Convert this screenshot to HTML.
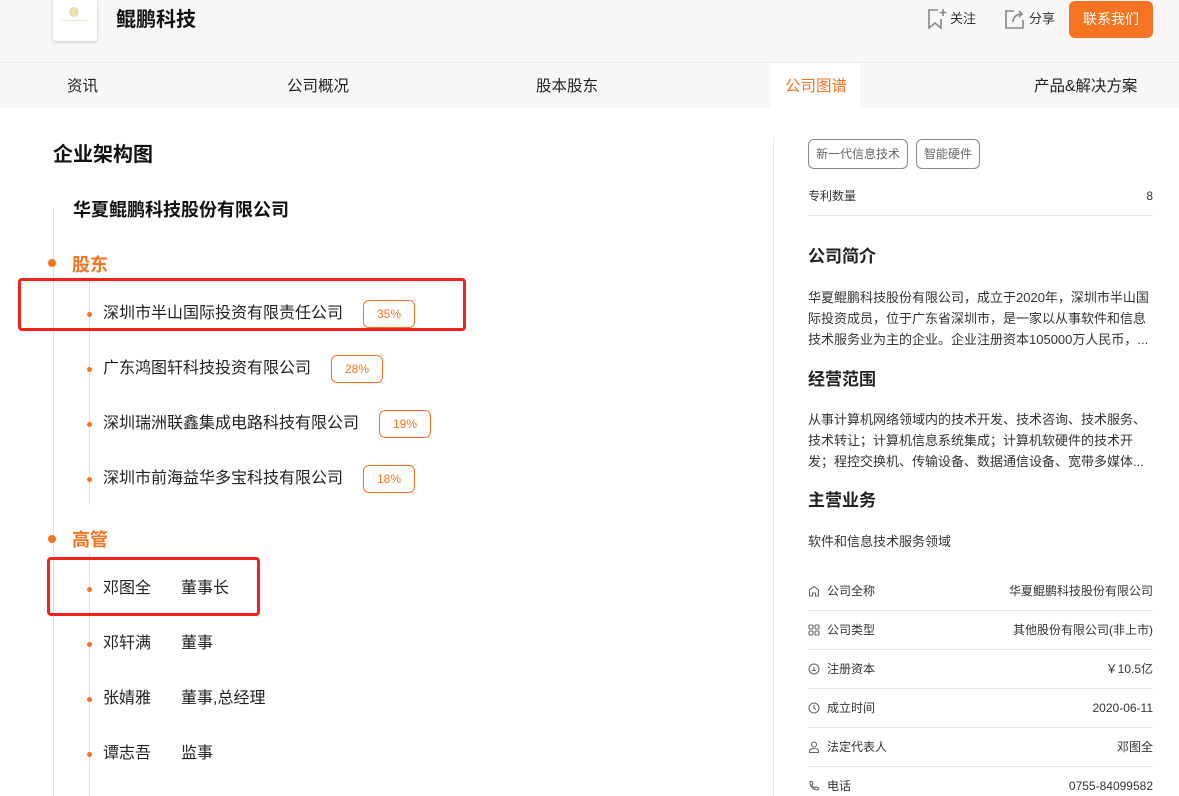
<!DOCTYPE html>
<html><head><meta charset="utf-8"><style>
*{margin:0;padding:0;box-sizing:border-box}
body{width:1179px;height:796px;overflow:hidden;background:#fff;font-family:"Liberation Sans","Noto Sans CJK SC",sans-serif;color:#222;position:relative}
.a{position:absolute;white-space:nowrap}
.t{height:20px;line-height:20px}
.or{color:#f57321}
.dot{position:absolute;border-radius:50%;background:#f57321}
.badge{position:absolute;width:52px;height:28px;border:1px solid #f57321;border-radius:6px;color:#f57321;font-size:12px;line-height:26px;text-align:center}
.tag{position:absolute;top:139px;height:30px;border:1px solid #888;border-radius:6px;color:#666;font-size:12px;line-height:28px;padding:0 7px}
.row{position:absolute;left:808px;width:345px;height:20px;line-height:20px;font-size:12px;color:#333}
.row .r{position:absolute;right:0;top:0}
.row .l{position:absolute;left:19px;top:0}
.row svg{position:absolute;left:0;top:4px}
.hr{position:absolute;left:808px;width:345px;height:1px;background:#e5e5e5}
.p{position:absolute;left:808px;font-size:13px;line-height:21px;color:#333;width:350px}
.h{position:absolute;left:808px;font-size:17px;font-weight:bold;height:24px;line-height:24px}
.red{position:absolute;border:3px solid #f5221b;border-radius:4px}
</style></head><body>
<div class="a" style="left:0;top:0;width:1179px;height:62px;background:#f7f7f7"></div>
<div class="a" style="left:0;top:62px;width:1179px;height:1px;background:#ebebeb"></div>
<div class="a" style="left:0;top:63px;width:1179px;height:45px;background:#f7f7f7"></div>
<div class="a" style="left:53px;top:0;width:44px;height:41px;background:#fff;border-radius:0 0 3px 3px;box-shadow:0 1px 3px rgba(0,0,0,.2)"><div style="position:absolute;left:16px;top:7px;width:10px;height:10px;border-radius:50%;background:#eadfb0"></div><div style="position:absolute;left:8px;top:20px;width:28px;height:1px;background:#efe6c4"></div></div>
<div class="a" style="left:116px;top:7px;font-size:20px;font-weight:bold;line-height:26px;color:#111">鲲鹏科技</div>
<svg class="a" style="left:926px;top:8px" width="22" height="22" viewBox="0 0 22 22" fill="none" stroke="#888" stroke-width="1.6"><path d="M12 2H3v18l6-5 6 5V11"/><path d="M17 1v7M13.5 4.5h7"/></svg>
<div class="a" style="left:950px;top:9px;font-size:13px;line-height:20px;color:#333">关注</div>
<svg class="a" style="left:1004px;top:8px" width="22" height="22" viewBox="0 0 22 22" fill="none" stroke="#888" stroke-width="1.6"><path d="M10 3H2v17h17v-8"/><path d="M9 14c0-5 4-8 9-8M15 3l3 3-3 3"/></svg>
<div class="a" style="left:1029px;top:9px;font-size:13px;line-height:20px;color:#333">分享</div>
<div class="a" style="left:1069px;top:1px;width:84px;height:37px;background:#f57321;border-radius:6px;color:#fff;font-size:14px;line-height:37px;text-align:center">联系我们</div>
<div class="a" style="left:770px;top:63px;width:90px;height:45px;background:#fff"></div>
<div class="a t" style="left:67px;top:77px;font-size:15.5px">资讯</div>
<div class="a t" style="left:287px;top:77px;font-size:15.5px">公司概况</div>
<div class="a t" style="left:536px;top:77px;font-size:15.5px">股本股东</div>
<div class="a t or" style="left:785px;top:77px;font-size:15.5px">公司图谱</div>
<div class="a t" style="left:1034px;top:77px;font-size:15.5px">产品&amp;解决方案</div>

<div class="a" style="left:53px;top:142px;font-size:20px;font-weight:bold;line-height:26px;color:#111">企业架构图</div>
<div class="a" style="left:53px;top:208px;width:1px;height:588px;background:#e0e0e0"></div>
<div class="a" style="left:73px;top:198px;font-size:18px;font-weight:bold;line-height:24px;color:#111">华夏鲲鹏科技股份有限公司</div>
<div class="dot" style="left:48px;top:259px;width:8px;height:8px"></div>
<div class="a or" style="left:72px;top:253px;font-size:18px;font-weight:bold;line-height:24px">股东</div>
<div class="a" style="left:89px;top:280px;width:1px;height:225px;background:#e0e0e0"></div>
<div class="dot" style="left:87px;top:312px;width:5px;height:5px"></div>
<div class="a t" style="left:103px;top:304px;font-size:16px">深圳市半山国际投资有限责任公司</div>
<div class="badge" style="left:363px;top:300px">35%</div>
<div class="dot" style="left:87px;top:367px;width:5px;height:5px"></div>
<div class="a t" style="left:103px;top:359px;font-size:16px">广东鸿图轩科技投资有限公司</div>
<div class="badge" style="left:331px;top:355px">28%</div>
<div class="dot" style="left:87px;top:422px;width:5px;height:5px"></div>
<div class="a t" style="left:103px;top:414px;font-size:16px">深圳瑞洲联鑫集成电路科技有限公司</div>
<div class="badge" style="left:379px;top:410px">19%</div>
<div class="dot" style="left:87px;top:477px;width:5px;height:5px"></div>
<div class="a t" style="left:103px;top:469px;font-size:16px">深圳市前海益华多宝科技有限公司</div>
<div class="badge" style="left:363px;top:465px">18%</div>
<div class="red" style="left:18px;top:278px;width:448px;height:53px"></div>

<div class="dot" style="left:48px;top:535px;width:8px;height:8px"></div>
<div class="a or" style="left:72px;top:528px;font-size:18px;font-weight:bold;line-height:24px">高管</div>
<div class="a" style="left:89px;top:553px;width:1px;height:243px;background:#e0e0e0"></div>
<div class="red" style="left:47px;top:557px;width:213px;height:59px"></div>
<div class="dot" style="left:87px;top:587px;width:5px;height:5px"></div>
<div class="a t" style="left:103px;top:579px;font-size:16px">邓图全</div><div class="a t" style="left:181px;top:579px;font-size:16px">董事长</div>
<div class="dot" style="left:87px;top:642px;width:5px;height:5px"></div>
<div class="a t" style="left:103px;top:634px;font-size:16px">邓轩满</div><div class="a t" style="left:181px;top:634px;font-size:16px">董事</div>
<div class="dot" style="left:87px;top:697px;width:5px;height:5px"></div>
<div class="a t" style="left:103px;top:689px;font-size:16px">张婧雅</div><div class="a t" style="left:181px;top:689px;font-size:16px">董事,总经理</div>
<div class="dot" style="left:87px;top:752px;width:5px;height:5px"></div>
<div class="a t" style="left:103px;top:744px;font-size:16px">谭志吾</div><div class="a t" style="left:181px;top:744px;font-size:16px">监事</div>

<div class="a" style="left:773px;top:138px;width:1px;height:658px;background:#e8e8e8"></div>
<div class="tag" style="left:808px;width:100px">新一代信息技术</div>
<div class="tag" style="left:916px;width:64px">智能硬件</div>
<div class="row" style="top:186px"><span>专利数量</span><span class="r">8</span></div>
<div class="hr" style="top:215px"></div>
<div class="h" style="top:245px">公司简介</div>
<div class="p" style="top:287px">华夏鲲鹏科技股份有限公司，成立于2020年，深圳市半山国<br>际投资成员，位于广东省深圳市，是一家以从事软件和信息<br>技术服务业为主的企业。企业注册资本105000万人民币，...</div>
<div class="h" style="top:368px">经营范围</div>
<div class="p" style="top:409px">从事计算机网络领域内的技术开发、技术咨询、技术服务、<br>技术转让；计算机信息系统集成；计算机软硬件的技术开<br>发；程控交换机、传输设备、数据通信设备、宽带多媒体...</div>
<div class="h" style="top:489px">主营业务</div>
<div class="p" style="top:531px">软件和信息技术服务领域</div>

<div class="row" style="top:581px"><svg width="12" height="12" viewBox="0 0 12 12" fill="none" stroke="#666" stroke-width="1.1"><path d="M1.5 11V5L6 1.5 10.5 5V11H7.5V8h-3v3z"/></svg><span class="l">公司全称</span><span class="r">华夏鲲鹏科技股份有限公司</span></div>
<div class="hr" style="top:610px"></div>
<div class="row" style="top:620px"><svg width="12" height="12" viewBox="0 0 12 12" fill="none" stroke="#666" stroke-width="1.1"><rect x="1" y="1" width="4" height="4" rx="1"/><rect x="7" y="1" width="4" height="4" rx="1"/><rect x="1" y="7" width="4" height="4" rx="1"/><rect x="7" y="7" width="4" height="4" rx="1"/></svg><span class="l">公司类型</span><span class="r">其他股份有限公司(非上市)</span></div>
<div class="hr" style="top:649px"></div>
<div class="row" style="top:659px"><svg width="12" height="12" viewBox="0 0 12 12" fill="none" stroke="#666" stroke-width="1.1"><circle cx="6" cy="6" r="5"/><path d="M4 7.5h4M6 4v4" /></svg><span class="l">注册资本</span><span class="r">￥10.5亿</span></div>
<div class="hr" style="top:688px"></div>
<div class="row" style="top:698px"><svg width="12" height="12" viewBox="0 0 12 12" fill="none" stroke="#666" stroke-width="1.1"><circle cx="6" cy="6" r="5"/><path d="M6 3v3l2 1.5"/></svg><span class="l">成立时间</span><span class="r">2020-06-11</span></div>
<div class="hr" style="top:727px"></div>
<div class="row" style="top:737px"><svg width="12" height="12" viewBox="0 0 12 12" fill="none" stroke="#666" stroke-width="1.1"><circle cx="6" cy="3.5" r="2.5"/><path d="M1.5 11.5v-1.5c0-1.5 1.5-2.5 4.5-2.5s4.5 1 4.5 2.5v1.5z"/></svg><span class="l">法定代表人</span><span class="r">邓图全</span></div>
<div class="hr" style="top:766px"></div>
<div class="row" style="top:776px"><svg width="12" height="12" viewBox="0 0 12 12" fill="none" stroke="#666" stroke-width="1.1"><path d="M2 1.5l2 0 1 2.5-1.2 1c.6 1.3 1.7 2.4 3 3l1-1.2 2.5 1v2c-5 .5-8.8-3.3-8.3-8.3z"/></svg><span class="l">电话</span><span class="r">0755-84099582</span></div>
</body></html>
